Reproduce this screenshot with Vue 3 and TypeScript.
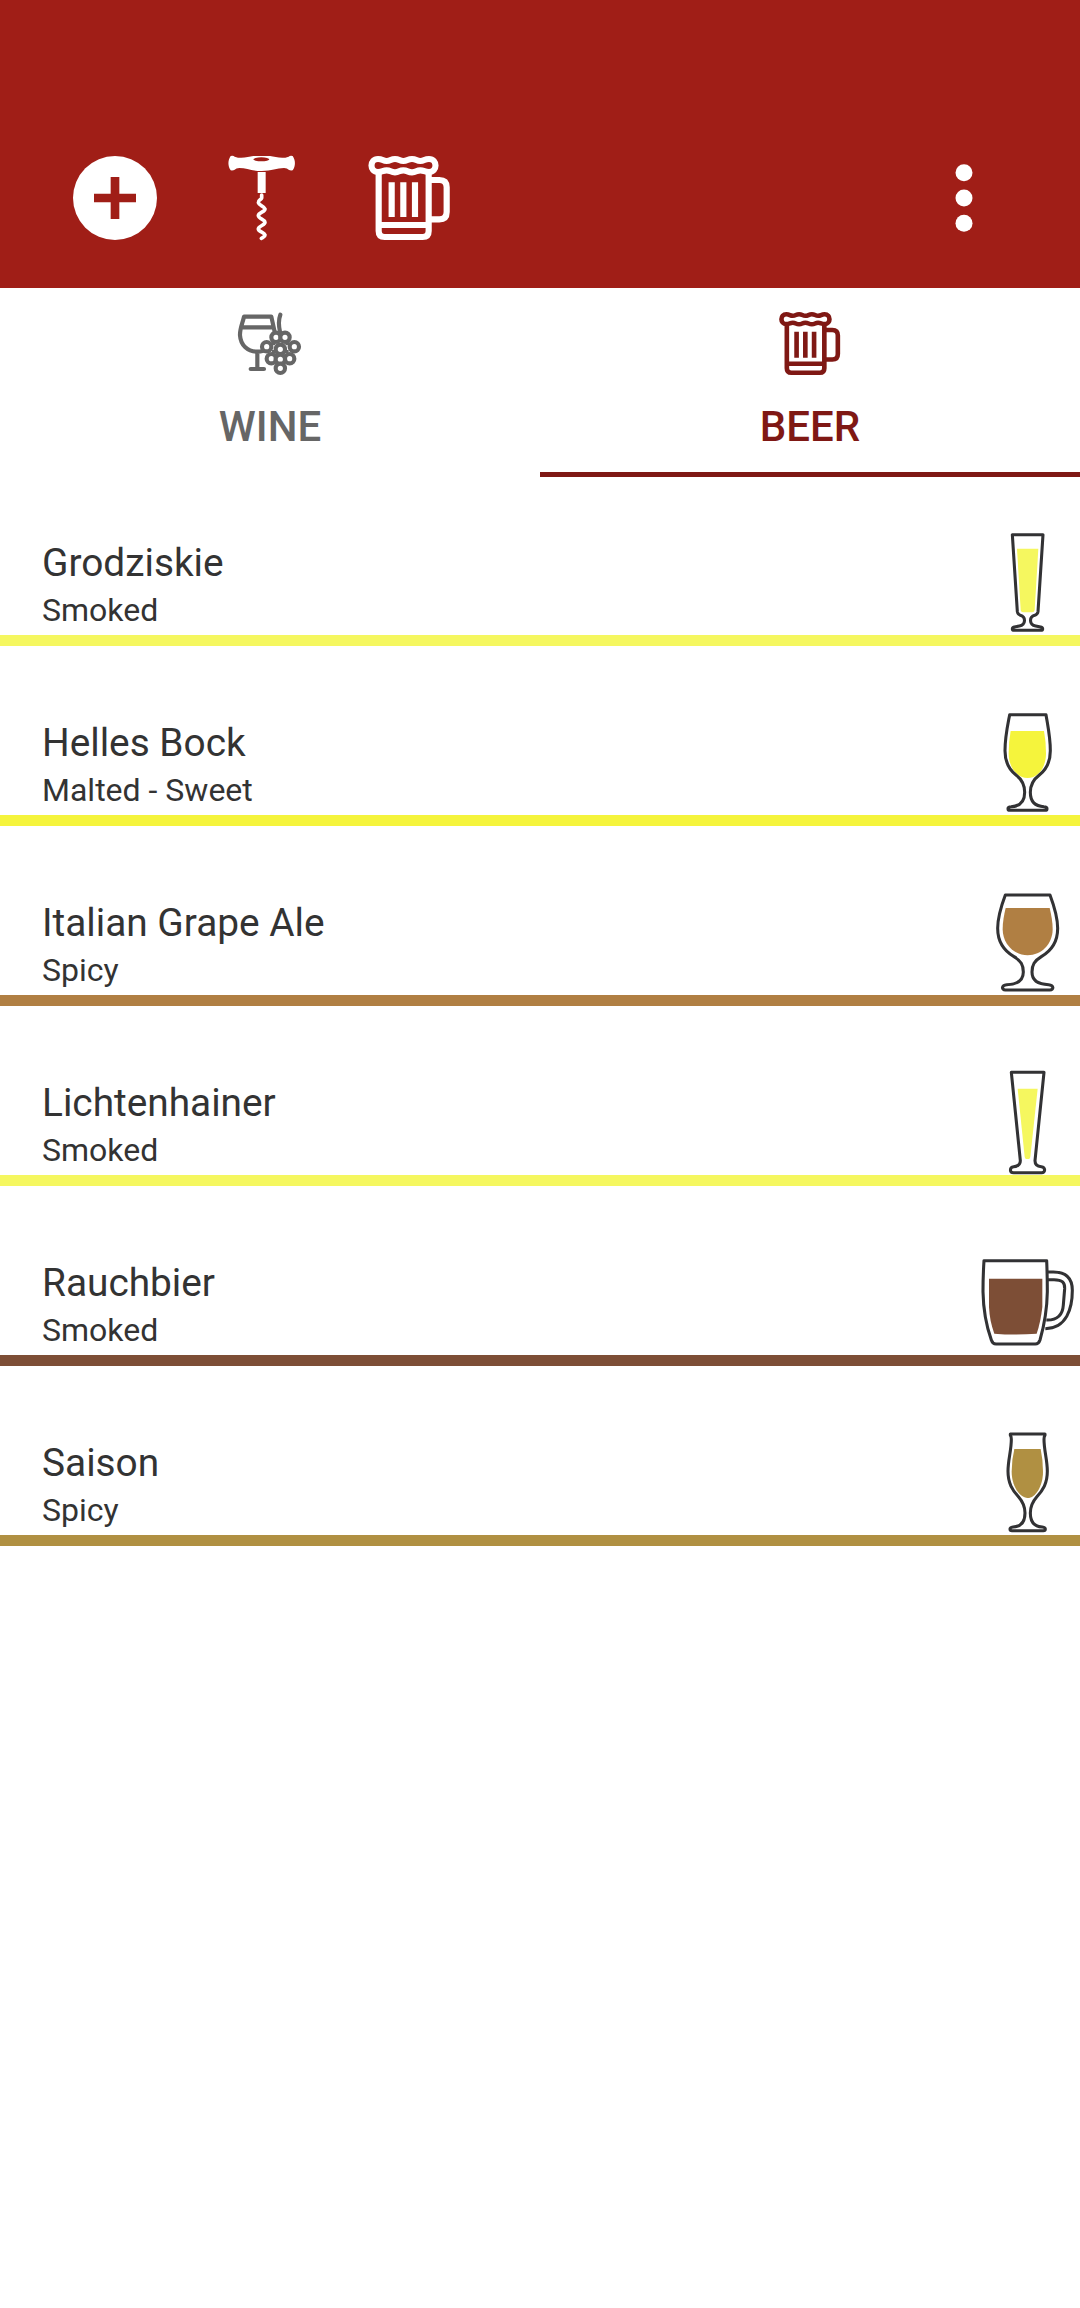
<script setup lang="ts">
interface Beer {
  name: string
  taste: string
  color: string
  outline: string[]
  liquid: string
}

const mug = {
  foam: 'M84 57C98 57 98 63 110 63S122 57 135 57S148 63 160 63S173 57 186 57S199 63 211 63S223 57 237 57C263 57 263 96 237 96C223 96 223 91 211 91S199 97 186 97S173 91 160 91S148 97 135 97S122 91 110 91S98 96 84 96C58 96 58 57 84 57Z',
  body: 'M86 98V273Q86 291 104 291H218Q236 291 236 273V98M86 255H236',
  bars: 'M125 127V231M160 127V231M195 127V231',
  handle: 'M236 120H268Q290 120 290 142V216Q290 238 268 238H236',
}

const beers: Beer[] = [
  {
    name: 'Grodziskie',
    taste: 'Smoked',
    color: '#f5f75f',
    outline: [
      'M127 44H219L204 275Q203 283 194 286C177 291 177 314 197 318L212 321Q218 323 218 327Q218 331 212 331H133Q127 331 127 327Q127 323 133 321L148 318C168 314 168 291 151 286Q143 283 142 275Z',
    ],
    liquid: 'M141 86H205L194 270Q193 277 186 277H159Q153 277 152 270Z',
  },
  {
    name: 'Helles Bock',
    taste: 'Malted - Sweet',
    color: '#f5f43c',
    outline: [
      'M119 44H228C233 76 241 110 241 152C241 188 230 208 208 225C188 240 181 255 181 277C181 302 193 319 222 320Q231 320 231 326Q231 331 225 331H120Q114 331 114 326Q114 320 123 320C153 319 164 302 164 277C164 255 158 240 138 225C116 208 105 188 105 152C105 110 113 76 119 44Z',
    ],
    liquid: 'M122 93H222Q228 125 228 160C228 205 203 234 173 234C143 234 116 205 116 160Q116 125 122 93Z',
  },
  {
    name: 'Italian Grape Ale',
    taste: 'Spicy',
    color: '#b07f43',
    outline: [
      'M106 45H240C252 77 263 108 263 145C263 184 247 211 214 230C193 243 186 254 186 276C186 300 201 313 236 314C252 315 252 330 240 330H106C94 330 94 315 110 314C145 313 160 300 160 276C160 254 153 243 132 230C99 211 83 184 83 145C83 108 94 77 106 45Z',
    ],
    liquid: 'M107 84H239C244 106 248 125 248 148C248 192 214 226 173 226C132 226 98 192 98 148C98 125 102 106 107 84Z',
  },
  {
    name: 'Lichtenhainer',
    taste: 'Smoked',
    color: '#f5f75f',
    outline: [
      'M124 37H222L195 302C195 314 202 319 214 320C227 322 227 338 215 338H131C118 338 118 322 131 320C143 319 151 314 151 302Z',
    ],
    liquid: 'M143 86H203L181 291Q180 297 176 297H169Q165 297 164 291Z',
  },
  {
    name: 'Rauchbier',
    taste: 'Smoked',
    color: '#7d4e36',
    outline: [
      'M42 62H230Q232 108 232 155C231 213 222 258 210 300Q206 312 196 312H78Q68 312 64 300C50 260 40 212 39 155Q39 108 42 62Z',
      'M233 96H250C291 96 307 119 307 151C307 205 290 265 226 266',
      'M233 119H252C277 119 285 128 284 146L280 195C278 226 260 241 229 240',
    ],
    liquid: 'M57 116H217V201Q212 246 200 281Q135 286 73 281Q59 244 57 201Z',
  },
  {
    name: 'Saison',
    taste: 'Spicy',
    color: '#b09042',
    outline: [
      'M121 42H225V46Q222 49 222 58C222 93 232 119 232 154C232 190 219 210 200 231C186 247 181 260 181 279C181 304 193 320 217 321Q226 322 226 327Q226 332 220 332H126Q120 332 120 327Q120 322 129 321C153 320 165 304 165 279C165 260 160 247 146 231C127 210 114 190 114 154C114 119 124 93 124 58Q124 49 121 46Z',
    ],
    liquid: 'M133 87H212Q219 120 219 155C219 199 196 234 173 234C150 234 125 199 125 155Q125 120 133 87Z',
  },
]
</script>

<template>
  <div class="screen">
    <header class="bar">
      <svg class="action" viewBox="39 48 252 252">
        <circle cx="165" cy="174" r="126" fill="#fff" />
        <path d="M165 111V237M102 174H228" stroke="#a01e17" stroke-width="26" />
      </svg>
      <svg class="action" viewBox="480 48 252 252">
        <path
          fill="#fff"
          d="M512 48Q520 46 524 50C545 58 565 50 580 48H630C646 50 665 58 686 50Q690 46 698 48C707 61 707 78 698 91Q690 92 686 89Q682 84 672 84C650 84 635 93 605 93C575 93 560 84 538 84Q528 84 524 89Q520 92 512 91C503 78 503 61 512 48Z"
        />
        <ellipse cx="604" cy="58" rx="24" ry="6" fill="#a01e17" />
        <path fill="#fff" d="M593 96H617V159H593Z" />
        <path
          fill="none"
          stroke="#fff"
          stroke-width="11"
          stroke-linecap="round"
          stroke-linejoin="round"
          d="M605 165V174C603 180 594 180 595 188C597 197 613 198 615 207C615 216 596 217 595 227C596 237 614 238 615 247C615 256 596 257 595 267C596 276 613 277 615 285C615 291 609 291 604 295"
        />
      </svg>
      <svg class="action mug" viewBox="51 48 252 252">
        <path :d="mug.foam" />
        <path :d="mug.body" />
        <path :d="mug.bars" />
        <path :d="mug.handle" />
      </svg>
      <svg class="action more" viewBox="-24 48 252 252">
        <circle cx="102" cy="98" r="25.5" />
        <circle cx="102" cy="174" r="25.5" />
        <circle cx="102" cy="250" r="25.5" />
      </svg>
    </header>

    <nav class="tabs">
      <div class="tab">
        <svg class="tab-icon wine" viewBox="114 36 192 192">
          <path d="M225 100L214 50H132C127 72 119 87 120 106C122 136 143 155 172 155Q181 155 190 152M127 82H220M172 155V206M152 207H192M241 44C235 60 236 78 240 95" />
          <g class="grapes">
            <circle cx="228" cy="112" r="14" />
            <circle cx="255" cy="112" r="14" />
            <circle cx="200" cy="140" r="14" />
            <circle cx="283" cy="140" r="14" />
            <circle cx="241" cy="148" r="14" />
            <circle cx="214" cy="176" r="14" />
            <circle cx="269" cy="176" r="14" />
            <circle cx="241" cy="178" r="14" />
            <circle cx="241" cy="205" r="14" />
          </g>
          <path class="fill" d="M214 124H226V136H214ZM256 124H268V136H256ZM216 150H226V160H216ZM256 150H266V160H256Z" />
        </svg>
        <span>WINE</span>
      </div>
      <div class="tab active">
        <svg class="tab-icon mug" viewBox="114 36 192 192">
          <g transform="translate(76 0) scale(.75)">
            <path :d="mug.foam" />
            <path :d="mug.body" />
            <path :d="mug.bars" />
            <path :d="mug.handle" />
          </g>
        </svg>
        <span>BEER</span>
      </div>
    </nav>

    <main class="list">
      <div v-for="beer in beers" :key="beer.name" class="row" :style="{ borderColor: beer.color }">
        <div class="info">
          <div class="name">{{ beer.name }}</div>
          <div class="taste">{{ beer.taste }}</div>
        </div>
        <svg class="glass" viewBox="0 0 330 345">
          <path :d="beer.liquid" :fill="beer.color" />
          <path v-for="line in beer.outline" :key="line" class="line" :d="line" />
        </svg>
      </div>
    </main>
  </div>
</template>

<style>
body {
  margin: 0;
  background: #fff;
}
</style>

<style scoped>
.screen {
  width: 1080px;
  height: 2308px;
  overflow: hidden;
  background: #fff;
  font-family: Roboto, sans-serif;
  color: #333;
}
.bar {
  box-sizing: border-box;
  height: 288px;
  padding: 156px 74px 0 73px;
  display: flex;
  gap: 63px;
  background: #a01e17;
  color: #fff;
}
.action {
  width: 84px;
  height: 84px;
  overflow: visible;
}
.more {
  margin-left: auto;
  fill: #fff;
}
.mug {
  fill: none;
  stroke: currentColor;
  stroke-width: 18.5;
  stroke-linejoin: round;
}
.tabs {
  display: flex;
  height: 189px;
}
.tab {
  box-sizing: border-box;
  flex: 1;
  display: flex;
  flex-direction: column;
  align-items: center;
  padding-top: 24px;
  font-size: 42px;
  font-weight: 500;
  line-height: 50px;
  color: #666;
}
.tab span {
  margin-top: 26px;
}
.active {
  color: #7f1814;
  border-bottom: 5px solid #7f1814;
}
.tab-icon {
  width: 64px;
  height: 64px;
  overflow: visible;
}
.wine {
  fill: none;
  stroke: currentColor;
  stroke-width: 12.5;
  stroke-linecap: round;
  stroke-linejoin: round;
}
.grapes {
  fill: #fff;
  stroke-width: 12.5;
}
.wine .fill {
  fill: currentColor;
  stroke: none;
}
.list {
  display: flex;
  flex-direction: column;
  gap: 11px;
}
.row {
  height: 158px;
  display: flex;
  justify-content: space-between;
  align-items: flex-end;
  border-bottom: 11px solid;
}
.info {
  padding: 0 0 2px 42px;
}
.name {
  margin-bottom: 1px;
  font-size: 38.8px;
  line-height: 46px;
}
.taste {
  font-size: 32px;
  line-height: 46px;
}
.glass {
  width: 110px;
  height: 115px;
}
.line {
  fill: none;
  stroke: #323234;
  stroke-width: 9.2;
  stroke-linejoin: round;
}
</style>
